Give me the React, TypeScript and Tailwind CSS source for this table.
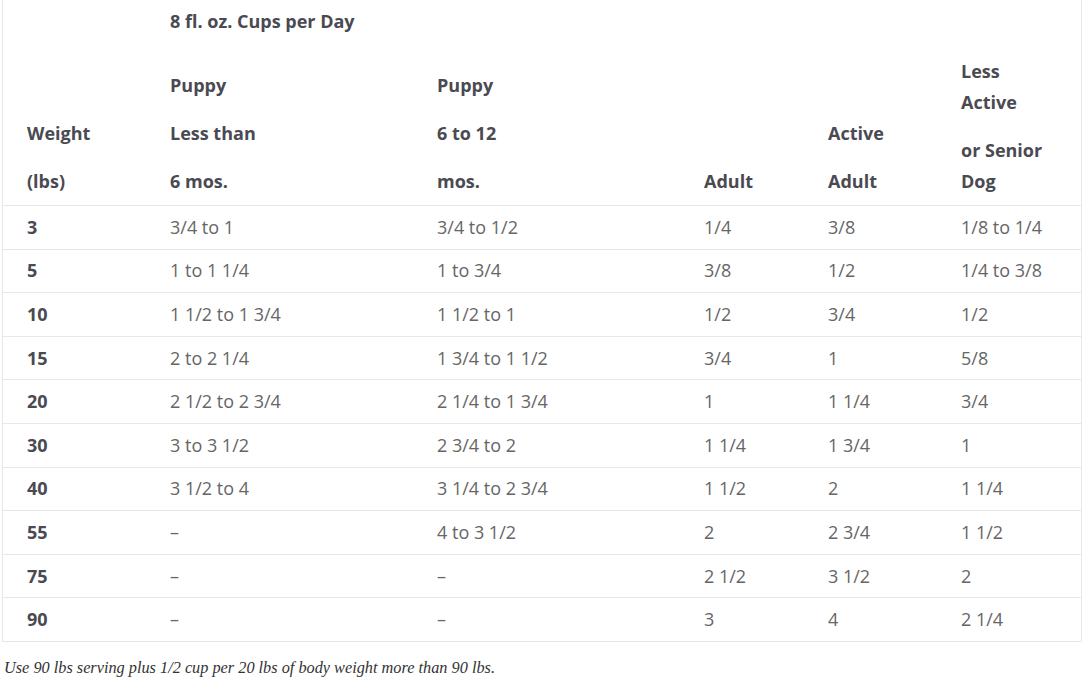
import React from "react";

const rows: string[][] = [
  ["3", "3/4 to 1", "3/4 to 1/2", "1/4", "3/8", "1/8 to 1/4"],
  ["5", "1 to 1 1/4", "1 to 3/4", "3/8", "1/2", "1/4 to 3/8"],
  ["10", "1 1/2 to 1 3/4", "1 1/2 to 1", "1/2", "3/4", "1/2"],
  ["15", "2 to 2 1/4", "1 3/4 to 1 1/2", "3/4", "1", "5/8"],
  ["20", "2 1/2 to 2 3/4", "2 1/4 to 1 3/4", "1", "1 1/4", "3/4"],
  ["30", "3 to 3 1/2", "2 3/4 to 2", "1 1/4", "1 3/4", "1"],
  ["40", "3 1/2 to 4", "3 1/4 to 2 3/4", "1 1/2", "2", "1 1/4"],
  ["55", "–", "4 to 3 1/2", "2", "2 3/4", "1 1/2"],
  ["75", "–", "–", "2 1/2", "3 1/2", "2"],
  ["90", "–", "–", "3", "4", "2 1/4"],
];

const grid = "grid grid-cols-[143px_267px_267px_124px_133px_144px]";

function HeadCell({ paras }: { paras: string[][] }) {
  return (
    <div className="pl-6 flex flex-col justify-end gap-[17px]">
      {paras.map((p, i) => (
        <div key={i}>
          {p.map((l, j) => (
            <div key={j} className="leading-[31px] whitespace-nowrap">
              {l}
            </div>
          ))}
        </div>
      ))}
    </div>
  );
}

export default function App() {
  return (
    <div className="bg-white w-[1084px] h-[684px] overflow-hidden" style={{ fontFamily: "'Open Sans', sans-serif" }}>
      <div className="ml-[2px] w-[1080px] border-x border-b border-[#e8e8e8] text-[18px]">
        <div className="h-[205px] flex flex-col text-[#4a4a52] font-bold">
          <div className={grid + " pt-[6px]"}>
            <div className="col-start-2 col-span-5 pl-6 leading-[31px]">8 fl. oz. Cups per Day</div>
          </div>
          <div className={grid + " flex-1 items-end pb-[8px]"}>
            <HeadCell paras={[["Weight"], ["(lbs)"]]} />
            <HeadCell paras={[["Puppy"], ["Less than"], ["6 mos."]]} />
            <HeadCell paras={[["Puppy"], ["6 to 12"], ["mos."]]} />
            <HeadCell paras={[["Adult"]]} />
            <HeadCell paras={[["Active"], ["Adult"]]} />
            <HeadCell paras={[["Less", "Active"], ["or Senior", "Dog"]]} />
          </div>
        </div>
        {rows.map((r, i) => (
          <div key={i} className={grid + " h-[43.6px] border-t border-[#e8e8e8] items-center"}>
            {r.map((c, j) => (
              <div
                key={j}
                className={
                  "pl-6 whitespace-nowrap " +
                  (j === 0 ? "font-bold text-[#4a4a52]" : "text-[#666666]")
                }
              >
                {c}
              </div>
            ))}
          </div>
        ))}
      </div>
      <p
        className="mt-[14px] ml-[4px] text-[16.3px] italic leading-6 text-[#333333]"
        style={{ fontFamily: "'Liberation Serif', serif" }}
      >
        Use 90 lbs serving plus 1/2 cup per 20 lbs of body weight more than 90 lbs.
      </p>
    </div>
  );
}
